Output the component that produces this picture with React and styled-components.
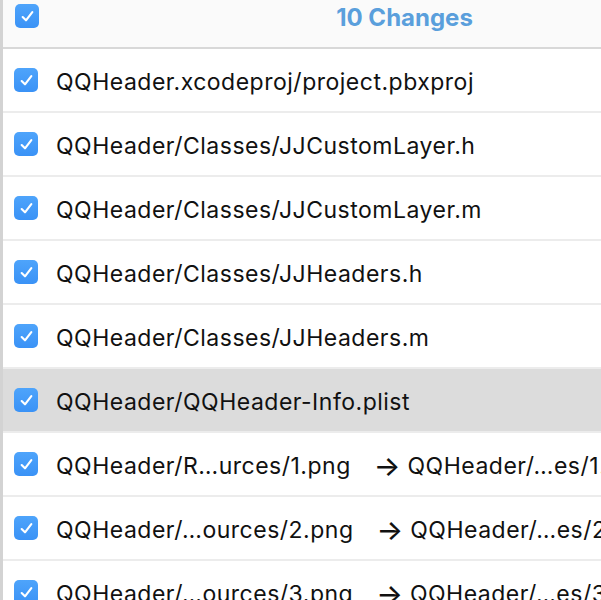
import React from 'react'
import styled, { createGlobalStyle } from 'styled-components'

const GlobalStyle = createGlobalStyle`
	html, body {
		margin: 0;
		padding: 0;
		background: #fff;
	}
	body {
		font-family: Inter, 'Liberation Sans', sans-serif;
		overflow: hidden;
	}
`

const files = [
	{ path: 'QQHeader.xcodeproj/project.pbxproj' },
	{ path: 'QQHeader/Classes/JJCustomLayer.h' },
	{ path: 'QQHeader/Classes/JJCustomLayer.m' },
	{ path: 'QQHeader/Classes/JJHeaders.h' },
	{ path: 'QQHeader/Classes/JJHeaders.m' },
	{ path: 'QQHeader/QQHeader-Info.plist', selected: true },
	{ path: 'QQHeader/R…urces/1.png', renamed: 'QQHeader/…es/1.png' },
	{ path: 'QQHeader/…ources/2.png', renamed: 'QQHeader/…es/2.png' },
	{ path: 'QQHeader/…ources/3.png', renamed: 'QQHeader/…es/3.png' },
]

const Viewport = styled.div`
	width: 601px;
	height: 600px;
	overflow: hidden;
`

const Panel = styled.div`
	width: 806px;
	min-height: 600px;
	border-left: 3px solid #d3d3d3;
	box-sizing: border-box;
	background: #fff;
`

const Header = styled.div`
	height: 49px;
	display: flex;
	align-items: flex-start;
	padding: 4px 0 0 12px;
	box-sizing: border-box;
	background: #fafafa;
	border-bottom: 2px solid #d8d8d8;
	position: relative;
`

const Title = styled.div`
	position: absolute;
	left: 0;
	right: 0;
	top: 3px;
	text-align: center;
	font-weight: 700;
	font-size: 24px;
	line-height: 30px;
	color: #5a9fdc;
	pointer-events: none;
`

const Row = styled.div`
	height: 62px;
	display: flex;
	align-items: center;
	padding-left: 11px;
	background: ${p => (p.selected ? '#dcdcdc' : '#fff')};
	border-bottom: 2px solid #ececec;
	white-space: nowrap;
`

const Box = styled.span`
	flex: none;
	width: 24px;
	height: 24px;
	border-radius: 5px;
	background: linear-gradient(#4ea4fb, #3a92f6);
	display: inline-flex;
	align-items: center;
	justify-content: center;
`

const Path = styled.span`
	margin-left: ${p => (p.renamed ? '0' : '18px')};
	padding-top: 3px;
	font-size: 23px;
	color: #111;
	letter-spacing: 0.5px;
`

const Arrow = styled.span`
	margin: 0 7px 0 23px;
	padding-top: 3px;
	font-size: 28px;
	font-weight: 500;
	color: #111;
	line-height: 1;
`

const Check = () => (
	<Box>
		<svg width="15" height="15" viewBox="0 0 14 14">
			<path d="M2.5 7.5 L5.6 10.6 L11.5 3" fill="none" stroke="#fff" strokeWidth="2" strokeLinecap="round" strokeLinejoin="round" />
		</svg>
	</Box>
)

export default function App() {
	return (
		<>
			<GlobalStyle />
			<Viewport>
				<Panel>
					<Header>
						<Check />
						<Title>10 Changes</Title>
					</Header>
					{files.map(f => (
						<Row key={f.path} selected={f.selected}>
							<Check />
							<Path>{f.path}</Path>
							{f.renamed && (
								<>
									<Arrow>→</Arrow>
									<Path renamed>{f.renamed}</Path>
								</>
							)}
						</Row>
					))}
				</Panel>
			</Viewport>
		</>
	)
}
